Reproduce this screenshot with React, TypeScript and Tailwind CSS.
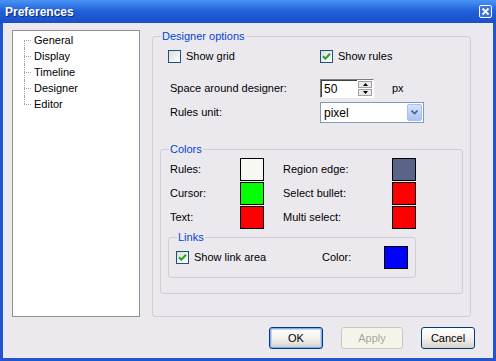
import type { FC, ReactNode } from "react"

const font = "font-['Liberation_Sans',Arial,sans-serif]"

const Checkbox: FC<{ checked?: boolean; label: string; className?: string }> = ({ checked, label, className }) => (
  <label className={`flex h-[13px] items-center gap-[5px] ${className ?? ""}`}>
    <span className="flex size-[13px] shrink-0 items-center justify-center border border-[#1c5180] bg-gradient-to-br from-[#dcdcd7] to-white">
      {checked && (
        <svg width="9" height="9" viewBox="0 0 9 9">
          <path d="M1 4.2 L3.4 6.6 L8 1.8" fill="none" stroke="#21a121" strokeWidth="2" />
        </svg>
      )}
    </span>
    <span>{label}</span>
  </label>
)

const Swatch: FC<{ color: string }> = ({ color }) => (
  <span className="h-[23px] w-[24px] shrink-0 border border-black" style={{ backgroundColor: color }} />
)

const GroupBox: FC<{ title: string; className?: string; children: ReactNode }> = ({ title, className, children }) => (
  <fieldset className={`rounded-[3px] border border-[#d0ced4] ${className ?? ""}`}>
    <legend className="ml-[8px] px-[1px] leading-[13px] text-[#0046d5]">{title}</legend>
    {children}
  </fieldset>
)

const XpButton: FC<{ label: string; width: string; disabled?: boolean; focused?: boolean }> = ({
  label,
  width,
  disabled,
  focused,
}) =>
  disabled ? (
    <button
      type="button"
      className={`h-[22px] ${width} rounded-[3px] border border-[#c9c7ba] bg-[#f5f4ea] text-[#aca899]`}
    >
      {label}
    </button>
  ) : (
    <button
      type="button"
      className={`h-[22px] ${width} rounded-[3px] border border-[#003c74] bg-gradient-to-b from-white via-[#f3f2ee] to-[#d6d3ca] text-black ${
        focused ? "shadow-[inset_0_0_0_1px_#88a8e8,inset_0_0_0_2px_#c7d5f5]" : ""
      }`}
    >
      {label}
    </button>
  )

const treeItems = ["General", "Display", "Timeline", "Designer", "Editor"]

export default function App() {
  return (
    <div className={`flex h-[361px] w-[496px] flex-col bg-[#1f55cf] text-[11px] text-black ${font}`}>
      {/* title bar */}
      <div className="flex h-[23px] shrink-0 items-center justify-between bg-gradient-to-b from-[#4a93f5] via-[#1f5fd8] to-[#1a4fc6] pl-[5px] pr-[4px]">
        <span className="text-[12px] font-bold text-white [text-shadow:1px_1px_0_#0a2a80]">Preferences</span>
        <span className="flex size-[13px] items-center justify-center rounded-[2px] border border-white bg-[#3c72e0]">
          <svg width="9" height="9" viewBox="0 0 9 9">
            <path d="M1.5 1.5 L7.5 7.5 M7.5 1.5 L1.5 7.5" stroke="white" strokeWidth="1.8" />
          </svg>
        </span>
      </div>

      {/* body */}
      <div className="mx-[3px] mb-[3px] flex flex-1 flex-col bg-[#ece9ee] pl-[9px] pt-[7px]">
        <div className="flex gap-[12px]">
          {/* tree */}
          <div className="h-[287px] w-[128px] shrink-0 border border-[#8f8f94] bg-white pl-[11px] pt-[1px]">
            {treeItems.map((item, i) => (
              <div key={item} className="flex h-[16px] items-center">
                <div className="flex h-full w-[7px] flex-col">
                  <div className={`h-[8px] ${i > 0 ? "border-l border-dotted border-[#a0a0a0]" : ""}`} />
                  <div
                    className={`h-[8px] border-t border-dotted border-[#a0a0a0] ${
                      i < treeItems.length - 1 ? "border-l" : ""
                    }`}
                  />
                </div>
                <span className="ml-[3px]">{item}</span>
              </div>
            ))}
          </div>

          {/* designer options */}
          <GroupBox title="Designer options" className="h-[287px] w-[319px]">
            <div className="pl-[7px]">
              <div className="ml-[8px] mt-[7px] flex">
                <Checkbox label="Show grid" className="w-[152px]" />
                <Checkbox label="Show rules" checked />
              </div>

              <div className="mt-[16px] flex items-center">
                <span className="ml-[10px] w-[150px]">Space around designer:</span>
                <div className="flex h-[19px] w-[54px] border border-t-[#7a7a7a] border-l-[#7a7a7a] border-b-white border-r-white bg-white">
                  <span className="flex-1 border-t border-l border-[#404040] pl-[2px] text-[12px] leading-[16px]">50</span>
                  <div className="flex w-[16px] flex-col gap-[1px] bg-white p-[1px]">
                    <span className="flex flex-1 items-center justify-center border border-[#a0a0a0] bg-[#ece9ee]">
                      <svg width="5" height="3" viewBox="0 0 5 3">
                        <path d="M2.5 0 L5 3 L0 3 Z" fill="black" />
                      </svg>
                    </span>
                    <span className="flex flex-1 items-center justify-center border border-[#a0a0a0] bg-[#ece9ee]">
                      <svg width="5" height="3" viewBox="0 0 5 3">
                        <path d="M0 0 L5 0 L2.5 3 Z" fill="black" />
                      </svg>
                    </span>
                  </div>
                </div>
                <span className="ml-[18px]">px</span>
              </div>

              <div className="mt-[4px] flex items-center">
                <span className="ml-[10px] w-[150px]">Rules unit:</span>
                <div className="flex h-[21px] w-[104px] items-center border border-[#7f9db9] bg-white pl-[3px]">
                  <span className="flex-1 text-[12px]">pixel</span>
                  <span className="mr-[1px] flex h-[17px] w-[15px] items-center justify-center rounded-[2px] border border-[#a9bfee] bg-gradient-to-b from-[#d6e2fd] to-[#aac2f5]">
                    <svg width="7" height="5" viewBox="0 0 7 5">
                      <path d="M0.5 0.5 L3.5 3.5 L6.5 0.5" fill="none" stroke="#4d6185" strokeWidth="1.6" />
                    </svg>
                  </span>
                </div>
              </div>

              {/* colors */}
              <GroupBox title="Colors" className="mt-[20px] h-[151px] w-[303px]">
                <div className="mt-[2px] flex flex-col gap-[1px] pl-[9px]">
                  {[
                    ["Rules:", "#f8f8f3", "Region edge:", "#5a6486"],
                    ["Cursor:", "#00ff00", "Select bullet:", "#ff0000"],
                    ["Text:", "#ff0000", "Multi select:", "#ff0000"],
                  ].map(([a, ac, b, bc]) => (
                    <div key={a} className="flex items-center">
                      <span className="w-[70px]">{a}</span>
                      <Swatch color={ac} />
                      <span className="ml-[19px] w-[109px]">{b}</span>
                      <Swatch color={bc} />
                    </div>
                  ))}
                </div>

                <GroupBox title="Links" className="ml-[7px] mt-[2px] h-[47px] w-[248px]">
                  <div className="mt-[2px] flex items-center pl-[7px]">
                    <Checkbox label="Show link area" checked className="w-[146px]" />
                    <span className="w-[62px]">Color:</span>
                    <Swatch color="#0000ff" />
                  </div>
                </GroupBox>
              </GroupBox>
            </div>
          </GroupBox>
        </div>

        {/* buttons */}
        <div className="mt-[10px] flex justify-end gap-[18px] pr-[18px]">
          <XpButton label="OK" width="w-[54px]" focused />
          <XpButton label="Apply" width="w-[62px]" disabled />
          <XpButton label="Cancel" width="w-[54px]" />
        </div>
      </div>
    </div>
  )
}
